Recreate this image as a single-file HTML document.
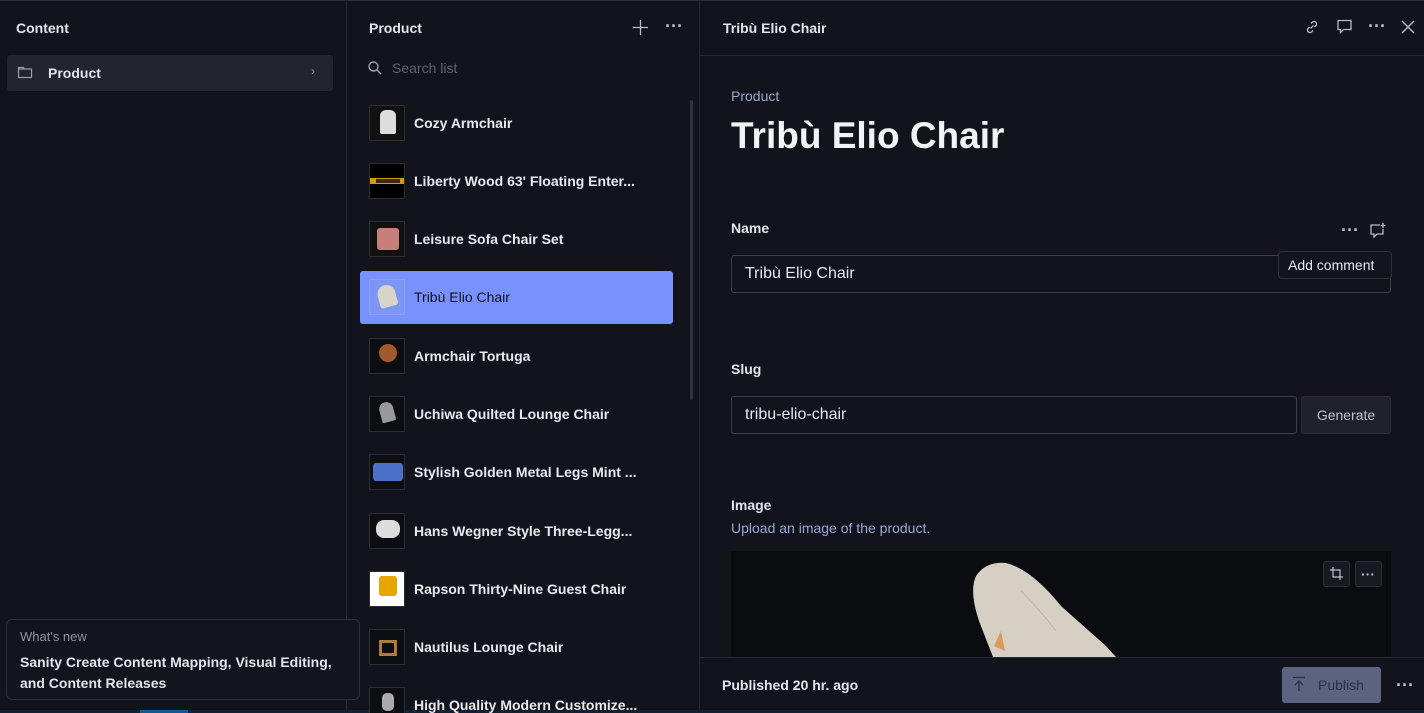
<!DOCTYPE html>
<html><head><meta charset="utf-8"><style>
*{box-sizing:border-box;margin:0;padding:0}
html,body{width:1424px;height:713px;overflow:hidden}
body{background:#13141b;font-family:"Liberation Sans",sans-serif;color:#e4e5ea;position:relative}
.abs{position:absolute}
.b{font-weight:bold}
.row{position:absolute;left:360px;width:313px;height:53px;border-radius:3px}
.thumb{position:absolute;left:9px;top:8px;width:36px;height:36px;border:1px solid #2a2c36;background:#0d0e12;overflow:hidden}
.rt{position:absolute;left:54px;top:18px;font-size:14px;font-weight:bold;color:#e8e9ee;white-space:nowrap}
.lbl{font-size:14px;font-weight:bold;color:#e4e5ea}
.inp{position:absolute;height:38px;border:1px solid #3b4050;border-radius:3px;font-size:16px;padding:9px 13px;color:#e8e9ee}
.dots{position:absolute;font-size:18px;line-height:10px;color:#b8bac4;letter-spacing:0px;font-weight:bold}
svg{position:absolute}
</style></head><body>
<div class="abs" style="left:0;top:0;width:1424px;height:1px;background:#2a2d3a"></div>
<div class="abs" style="left:346px;top:0;width:1px;height:713px;background:#262833"></div>
<div class="abs" style="left:699px;top:0;width:1px;height:713px;background:#262833"></div>
<div class="abs b" style="left:16px;top:20px;font-size:14px">Content</div>
<div class="abs" style="left:7px;top:55px;width:326px;height:36px;background:#22242e;border-radius:3px"></div>
<svg style="left:17px;top:64px" width="16" height="16" viewBox="0 0 16 16" fill="none" stroke="#9a9caa" stroke-width="1.2"><path d="M1.5 3.5h5l1 1.5h7v8.5h-13z M1.5 5h6"/></svg>
<div class="abs b" style="left:48px;top:65px;font-size:14px">Product</div>
<div class="abs" style="left:311px;top:64px;font-size:12px;color:#8a8c98">›</div>
<div class="abs" style="left:6px;top:619px;width:354px;height:81px;border:1px solid #2b2d38;border-radius:6px;background:#14151c"></div>
<div class="abs" style="left:20px;top:629px;font-size:13px;color:#8f92a0">What's new</div>
<div class="abs b" style="left:20px;top:652px;font-size:14px;line-height:21px;color:#e4e5ea">Sanity Create Content Mapping, Visual Editing,<br>and Content Releases</div>
<div class="abs" style="left:0;top:710px;width:700px;height:3px;background:#0f2233"></div>
<div class="abs" style="left:140px;top:710px;width:48px;height:3px;background:#125a8a"></div>
<div class="abs b" style="left:369px;top:20px;font-size:14px">Product</div>
<svg style="left:632px;top:19px" width="17" height="17" viewBox="0 0 17 17" stroke="#b8bac4" stroke-width="1.3"><path d="M8.5 1v15M1 8.5h15"/></svg>
<div class="dots" style="left:665px;top:21px">···</div>
<svg style="left:367px;top:60px" width="16" height="16" viewBox="0 0 16 16" fill="none" stroke="#a0a2ae" stroke-width="1.4"><circle cx="6.5" cy="6.5" r="4.5"/><path d="M10 10l4 4"/></svg>
<div class="abs" style="left:392px;top:60px;font-size:14px;color:#5d606e">Search list</div>
<div class="abs" style="left:690px;top:100px;width:3px;height:300px;background:#2f3240;border-radius:2px"></div>

<div class="row" style="top:97px"><div class="thumb" style="background:#111"><div class="abs" style="left:10px;top:4px;width:16px;height:24px;background:#ddd;border-radius:6px 6px 2px 2px"></div></div><div class="rt">Cozy Armchair</div></div>
<div class="row" style="top:155px"><div class="thumb" style="background:#000"><div class="abs" style="left:0;top:14px;width:36px;height:6px;background:#c9a000"></div><div class="abs" style="left:6px;top:15px;width:24px;height:4px;background:#3a2a10"></div></div><div class="rt">Liberty Wood 63' Floating Enter...</div></div>
<div class="row" style="top:213px"><div class="thumb" style="background:#111"><div class="abs" style="left:7px;top:6px;width:22px;height:22px;background:#c77f7a;border-radius:3px"></div></div><div class="rt">Leisure Sofa Chair Set</div></div>
<div class="row" style="top:271px;background:#7891ff"><div class="thumb" style="background:#7d95f5;border-color:#8aa0f8"><div class="abs" style="left:8px;top:5px;width:18px;height:22px;background:#d9d4c8;border-radius:10px 10px 3px 3px;transform:rotate(-15deg)"></div></div><div class="rt" style="color:#10121a;font-weight:normal">Tribù Elio Chair</div></div>
<div class="row" style="top:330px"><div class="thumb"><div class="abs" style="left:9px;top:5px;width:18px;height:18px;background:#a05a2c;border-radius:50%"></div></div><div class="rt">Armchair Tortuga</div></div>
<div class="row" style="top:388px"><div class="thumb"><div class="abs" style="left:10px;top:5px;width:14px;height:20px;background:#999;border-radius:8px 8px 2px 2px;transform:rotate(-15deg)"></div></div><div class="rt">Uchiwa Quilted Lounge Chair</div></div>
<div class="row" style="top:446px"><div class="thumb"><div class="abs" style="left:3px;top:8px;width:30px;height:18px;background:#4a6fc9;border-radius:3px"></div></div><div class="rt">Stylish Golden Metal Legs Mint ...</div></div>
<div class="row" style="top:505px"><div class="thumb"><div class="abs" style="left:6px;top:6px;width:24px;height:18px;background:#ddd;border-radius:8px"></div></div><div class="rt">Hans Wegner Style Three-Legg...</div></div>
<div class="row" style="top:563px"><div class="thumb" style="background:#fff"><div class="abs" style="left:9px;top:4px;width:18px;height:20px;background:#e8a500;border-radius:3px"></div></div><div class="rt">Rapson Thirty-Nine Guest Chair</div></div>
<div class="row" style="top:621px"><div class="thumb"><div class="abs" style="left:9px;top:10px;width:18px;height:16px;border:3px solid #b07a40"></div></div><div class="rt">Nautilus Lounge Chair</div></div>
<div class="row" style="top:679px"><div class="thumb"><div class="abs" style="left:12px;top:5px;width:12px;height:18px;background:#aaa;border-radius:5px"></div></div><div class="rt">High Quality Modern Customize...</div></div>

<div class="abs b" style="left:723px;top:20px;font-size:14px">Tribù Elio Chair</div>
<svg style="left:1304px;top:19px" width="16" height="16" viewBox="0 0 16 16" fill="none" stroke="#b8bac4" stroke-width="1.3"><path d="M6.5 9.5l3-3M7 4.5l1.5-1.5a2.5 2.5 0 013.5 3.5L10.5 8M9 11.5L7.5 13A2.5 2.5 0 014 9.5L5.5 8"/></svg>
<svg style="left:1336px;top:18px" width="17" height="17" viewBox="0 0 17 17" fill="none" stroke="#b8bac4" stroke-width="1.3"><path d="M2 2.5h13v9H7.5l-3 3v-3H2z"/></svg>
<div class="dots" style="left:1368px;top:21px">···</div>
<svg style="left:1401px;top:20px" width="14" height="14" viewBox="0 0 14 14" stroke="#b8bac4" stroke-width="1.4"><path d="M1 1l12 12M13 1L1 13"/></svg>
<div class="abs" style="left:700px;top:55px;width:724px;height:1px;background:#262833"></div>

<div class="abs" style="left:731px;top:88px;font-size:14px;color:#9aa6d8">Product</div>
<div class="abs b" style="left:731px;top:115px;font-size:37px;color:#f2f3f6">Tribù Elio Chair</div>

<div class="abs lbl" style="left:731px;top:220px">Name</div>
<div class="dots" style="left:1341px;top:225px">···</div>
<svg style="left:1369px;top:222px" width="18" height="18" viewBox="0 0 18 18" fill="none" stroke="#b8bac4" stroke-width="1.3"><path d="M11 3H2v9h3v3l3-3h6V7M14 1v5M11.5 3.5h5"/></svg>
<div class="inp" style="left:731px;top:255px;width:660px">Tribù Elio Chair</div>
<div class="abs" style="left:1278px;top:251px;width:114px;height:28px;background:#14151c;border:1px solid #2e303b;border-radius:4px;font-size:14px;padding:5px 9px;color:#e8e9ee">Add comment</div>

<div class="abs lbl" style="left:731px;top:361px">Slug</div>
<div class="inp" style="left:731px;top:396px;width:566px">tribu-elio-chair</div>
<div class="abs" style="left:1301px;top:396px;width:90px;height:38px;background:#20222b;border:1px solid #2b2d38;border-radius:3px;font-size:14px;color:#bfc1cb;padding:10px 0;text-align:center">Generate</div>

<div class="abs lbl" style="left:731px;top:497px">Image</div>
<div class="abs" style="left:731px;top:520px;font-size:14px;color:#9aa6d8">Upload an image of the product.</div>
<div class="abs" style="left:731px;top:551px;width:660px;height:106px;background:#0b0c10;overflow:hidden">
<svg style="left:0;top:0" width="660" height="106" viewBox="0 0 660 106"><path d="M262 106 L248 70 Q238 40 245 25 Q255 10 275 12 Q300 18 330 55 L375 95 L385 106 Z" fill="#d5d0c3"/><path d="M263 95 L270 80 L274 100Z" fill="#d99a5a"/><path d="M290 40 Q310 60 325 80" stroke="#bdb8aa" fill="none"/></svg>
</div>
<div class="abs" style="left:1323px;top:561px;width:27px;height:26px;background:#181a22;border:1px solid #2e303b;border-radius:3px"></div>
<svg style="left:1329px;top:566px" width="15" height="15" viewBox="0 0 15 15" fill="none" stroke="#c0c2cc" stroke-width="1.2"><path d="M4 1v10h10M1 4h10v10"/></svg>
<div class="abs" style="left:1355px;top:561px;width:27px;height:26px;background:#181a22;border:1px solid #2e303b;border-radius:3px"></div>
<div class="dots" style="left:1361px;top:569px;font-size:14px">···</div>

<div class="abs" style="left:700px;top:657px;width:724px;height:56px;background:#13141b;border-top:1px solid #262833"></div>
<div class="abs b" style="left:722px;top:677px;font-size:14px">Published 20 hr. ago</div>
<div class="abs" style="left:1282px;top:667px;width:99px;height:36px;background:#5c6380;border-radius:3px"></div>
<svg style="left:1291px;top:676px" width="16" height="16" viewBox="0 0 16 16" fill="none" stroke="#2c3144" stroke-width="1.3"><path d="M2 1.5h12M8 15V5M4 9l4-4 4 4"/></svg>
<div class="abs" style="left:1318px;top:677px;font-size:14px;color:#2c3144">Publish</div>
<div class="dots" style="left:1396px;top:680px">···</div>
<div class="abs" style="left:700px;top:710px;width:724px;height:3px;background:#0f2233"></div>
</body></html>
